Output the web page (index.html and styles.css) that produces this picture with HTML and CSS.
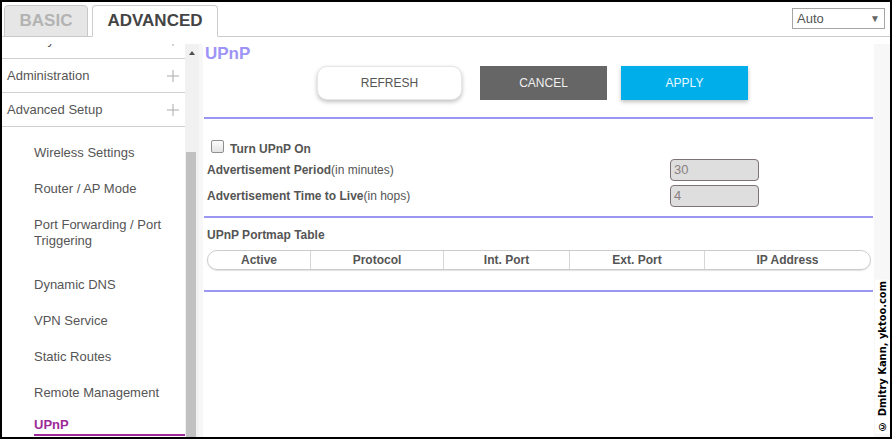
FILE: index.html
```html
<!DOCTYPE html>
<html lang="en">

<head>
    <meta charset="UTF-8">
    <title>UPnP</title>
    <link rel="stylesheet" href="styles.css">
</head>

<body>
    <div class="frame">
        <div class="topbar">
            <div class="tab tab-basic">BASIC</div>
            <div class="tab tab-adv">ADVANCED</div>
            <div class="lang-select">
                <span>Auto</span>
                <span class="caret">&#9660;</span>
            </div>
        </div>

        <div class="main">
            <div class="sidebar">
                <div class="nav-row cut">Security
                    <svg class="plus" width="12" height="12" viewBox="0 0 12 12"><path d="M6 0V12M0 6H12" stroke="#aaa" stroke-width="1"/></svg>
                </div>
                <div class="nav-row">Administration
                    <svg class="plus" width="12" height="12" viewBox="0 0 12 12"><path d="M6 0V12M0 6H12" stroke="#aaa" stroke-width="1"/></svg>
                </div>
                <div class="nav-row">Advanced Setup
                    <svg class="plus" width="12" height="12" viewBox="0 0 12 12"><path d="M6 0V12M0 6H12" stroke="#aaa" stroke-width="1"/></svg>
                </div>
                <div class="subnav">
                    <div class="sub-item">Wireless Settings</div>
                    <div class="sub-item">Router / AP Mode</div>
                    <div class="sub-item tall">Port Forwarding / Port Triggering</div>
                    <div class="sub-item">Dynamic DNS</div>
                    <div class="sub-item">VPN Service</div>
                    <div class="sub-item">Static Routes</div>
                    <div class="sub-item">Remote Management</div>
                    <div class="sub-item active">UPnP</div>
                </div>
            </div>

            <div class="scrollbar">
                <div class="sb-up"></div>
                <div class="sb-thumb"></div>
            </div>

            <div class="panel">
                <div class="page">
                    <h1 class="page-title">UPnP</h1>

                    <div class="actions">
                        <div class="btn btn-refresh">REFRESH</div>
                        <div class="btn btn-cancel">CANCEL</div>
                        <div class="btn btn-apply">APPLY</div>
                    </div>

                    <div class="rule"></div>

                    <div class="check-row">
                        <span class="checkbox"></span>
                        <span class="check-label">Turn UPnP On</span>
                    </div>

                    <div class="field first">
                        <div class="field-label"><b>Advertisement Period</b>(in minutes)</div>
                        <div class="field-input">30</div>
                    </div>
                    <div class="field">
                        <div class="field-label"><b>Advertisement Time to Live</b>(in hops)</div>
                        <div class="field-input">4</div>
                    </div>

                    <div class="rule rule-mid"></div>

                    <div class="table-title">UPnP Portmap Table</div>
                    <div class="table-head">
                        <div>Active</div>
                        <div>Protocol</div>
                        <div>Int. Port</div>
                        <div>Ext. Port</div>
                        <div>IP Address</div>
                    </div>

                    <div class="rule rule-end"></div>
                </div>
            </div>
        </div>

        <div class="credit">&copy; Dmitry Kann, yktoo.com</div>
    </div>
</body>
</html>
```

FILE: styles.css
```css
body {
    margin: 0;
    font-family: "Liberation Sans", Arial, sans-serif;
    background: #fff;
}

.frame {
    width: 892px;
    height: 439px;
    box-sizing: border-box;
    border: 2px solid #000;
    position: relative;
    overflow: hidden;
    display: flex;
    flex-direction: column;
}

/* top tabs */
.topbar {
    display: flex;
    align-items: flex-end;
    height: 34px;
    padding-left: 2px;
    border-bottom: 1px solid #ccc;
    flex-shrink: 0;
}
.tab {
    height: 32px;
    box-sizing: border-box;
    margin-bottom: -1px;
    border: 1px solid #c8c8c8;
    border-radius: 4px 4px 0 0;
    font-size: 17px;
    font-weight: bold;
    line-height: 30px;
    text-align: center;
}
.tab-basic {
    width: 84px;
    background: #e6e6e6;
    color: #b3b3b3;
}
.tab-adv {
    width: 126px;
    margin-left: 4px;
    background: #fff;
    border-color: #ccc;
    border-bottom-color: #fff;
    color: #444;
}
.lang-select {
    align-self: flex-start;
    margin: 6px 5px 0 auto;
    width: 93px;
    height: 21px;
    box-sizing: border-box;
    border: 1px solid #a6a6a6;
    display: flex;
    align-items: center;
    justify-content: space-between;
    padding: 0 4px 0 4px;
    font-size: 13px;
    color: #555;
}
.lang-select .caret {
    font-size: 10px;
    color: #666;
}

.main {
    display: flex;
    flex: 1;
    min-height: 0;
    margin-top: 7px;
}

/* left menu */
.sidebar {
    width: 183px;
    overflow: hidden;
    flex-shrink: 0;
}
.nav-row {
    height: 34px;
    box-sizing: border-box;
    border-bottom: 1px solid #d0d0d0;
    display: flex;
    align-items: center;
    justify-content: space-between;
    padding: 0 6px 0 5px;
    font-size: 13px;
    color: #555;
}
.nav-row.cut {
    height: 38px;
    margin-top: -23px;
}
.subnav {
    margin-left: 32px;
    padding-top: 8px;
}
.sub-item {
    padding: 10px 0;
    font-size: 13px;
    line-height: 16px;
    color: #555;
}
.sub-item.tall {
    margin-bottom: 8px;
}
.sub-item.active {
    padding: 6px 0 1px;
    border-bottom: 2px solid #9c2a98;
    color: #9c2a98;
    font-weight: bold;
}

.scrollbar {
    width: 14px;
    flex-shrink: 0;
    background: #f1f1f1;
    display: flex;
    flex-direction: column;
}
.sb-up {
    width: 0;
    margin: 7px auto 0;
    border-left: 3px solid transparent;
    border-right: 3px solid transparent;
    border-bottom: 4px solid #505050;
}
.sb-thumb {
    flex: 1;
    margin: 97px 3px 0 1px;
    background: #c1c1c1;
}

/* content */
.panel {
    flex: 1;
    background: #f7f7f7;
    padding: 0 16px 0 4px;
}
.page {
    height: 100%;
    background: #fff;
    padding: 0 1px;
}
.page-title {
    margin: 0;
    padding-left: 1px;
    font-size: 17px;
    line-height: 20px;
    color: #9d94f6;
}

.actions {
    display: flex;
    margin-top: 2px;
    padding-left: 113px;
}
.btn {
    height: 34px;
    box-sizing: border-box;
    display: flex;
    align-items: center;
    justify-content: center;
    font-size: 12px;
}
.btn-refresh {
    width: 145px;
    background: #fff;
    border: 1px solid #e6e6e6;
    border-radius: 10px;
    box-shadow: 0 2px 4px rgba(0, 0, 0, 0.25);
    color: #555;
}
.btn-cancel {
    width: 127px;
    margin-left: 18px;
    background: #666;
    color: #f0f0f0;
}
.btn-apply {
    width: 127px;
    margin-left: 14px;
    background: #00aeea;
    box-shadow: 0 2px 4px rgba(0, 0, 0, 0.25);
    color: #eaf8ff;
}

.rule {
    height: 2px;
    margin-top: 17px;
    background: #9c96f3;
}
.rule-mid {
    margin-top: 9px;
}
.rule-end {
    margin-top: 20px;
}

.check-row {
    display: flex;
    align-items: flex-start;
    margin-top: 21px;
    padding-left: 7px;
    height: 13px;
}
.checkbox {
    width: 13px;
    height: 13px;
    box-sizing: border-box;
    border: 1px solid #8f8f8f;
    border-radius: 2px;
    background: linear-gradient(#fdfdfd, #e4e4e4);
}
.check-label {
    margin: 1px 0 0 6px;
    font-size: 12px;
    font-weight: bold;
    line-height: 16px;
    color: #555;
}

.field {
    display: flex;
    align-items: center;
    height: 22px;
    margin-top: 4px;
}
.field.first {
    margin-top: 6px;
}
.field-label {
    width: 466px;
    padding-left: 3px;
    box-sizing: border-box;
    font-size: 12px;
    color: #555;
}
.field-input {
    width: 89px;
    height: 22px;
    box-sizing: border-box;
    border: 1px solid #7d7171;
    border-radius: 4px;
    background: #dedede;
    padding-left: 3px;
    font-size: 13px;
    line-height: 20px;
    color: #8a8080;
}

.table-title {
    margin-top: 9px;
    padding-left: 3px;
    font-size: 12px;
    font-weight: bold;
    line-height: 16px;
    color: #555;
}
.table-head {
    display: grid;
    grid-template-columns: 102px 133px 126px 135px 1fr;
    width: 664px;
    height: 20px;
    box-sizing: border-box;
    margin: 7px 0 0 3px;
    border: 1px solid #ccc;
    border-radius: 10px;
    box-shadow: 0 1px 1px rgba(0, 0, 0, 0.12);
}
.table-head div {
    font-size: 12px;
    font-weight: bold;
    line-height: 18px;
    text-align: center;
    color: #555;
}
.table-head div + div {
    border-left: 1px solid #d6d6d6;
}

/* watermark over the right edge */
.credit {
    position: absolute;
    right: 0;
    bottom: 3px;
    padding: 1px 1px;
    background: #fff;
    writing-mode: vertical-rl;
    transform: rotate(180deg);
    font-family: "DejaVu Sans Condensed", "DejaVu Sans", sans-serif;
    font-size: 11px;
    font-weight: bold;
    color: #000;
}
```
